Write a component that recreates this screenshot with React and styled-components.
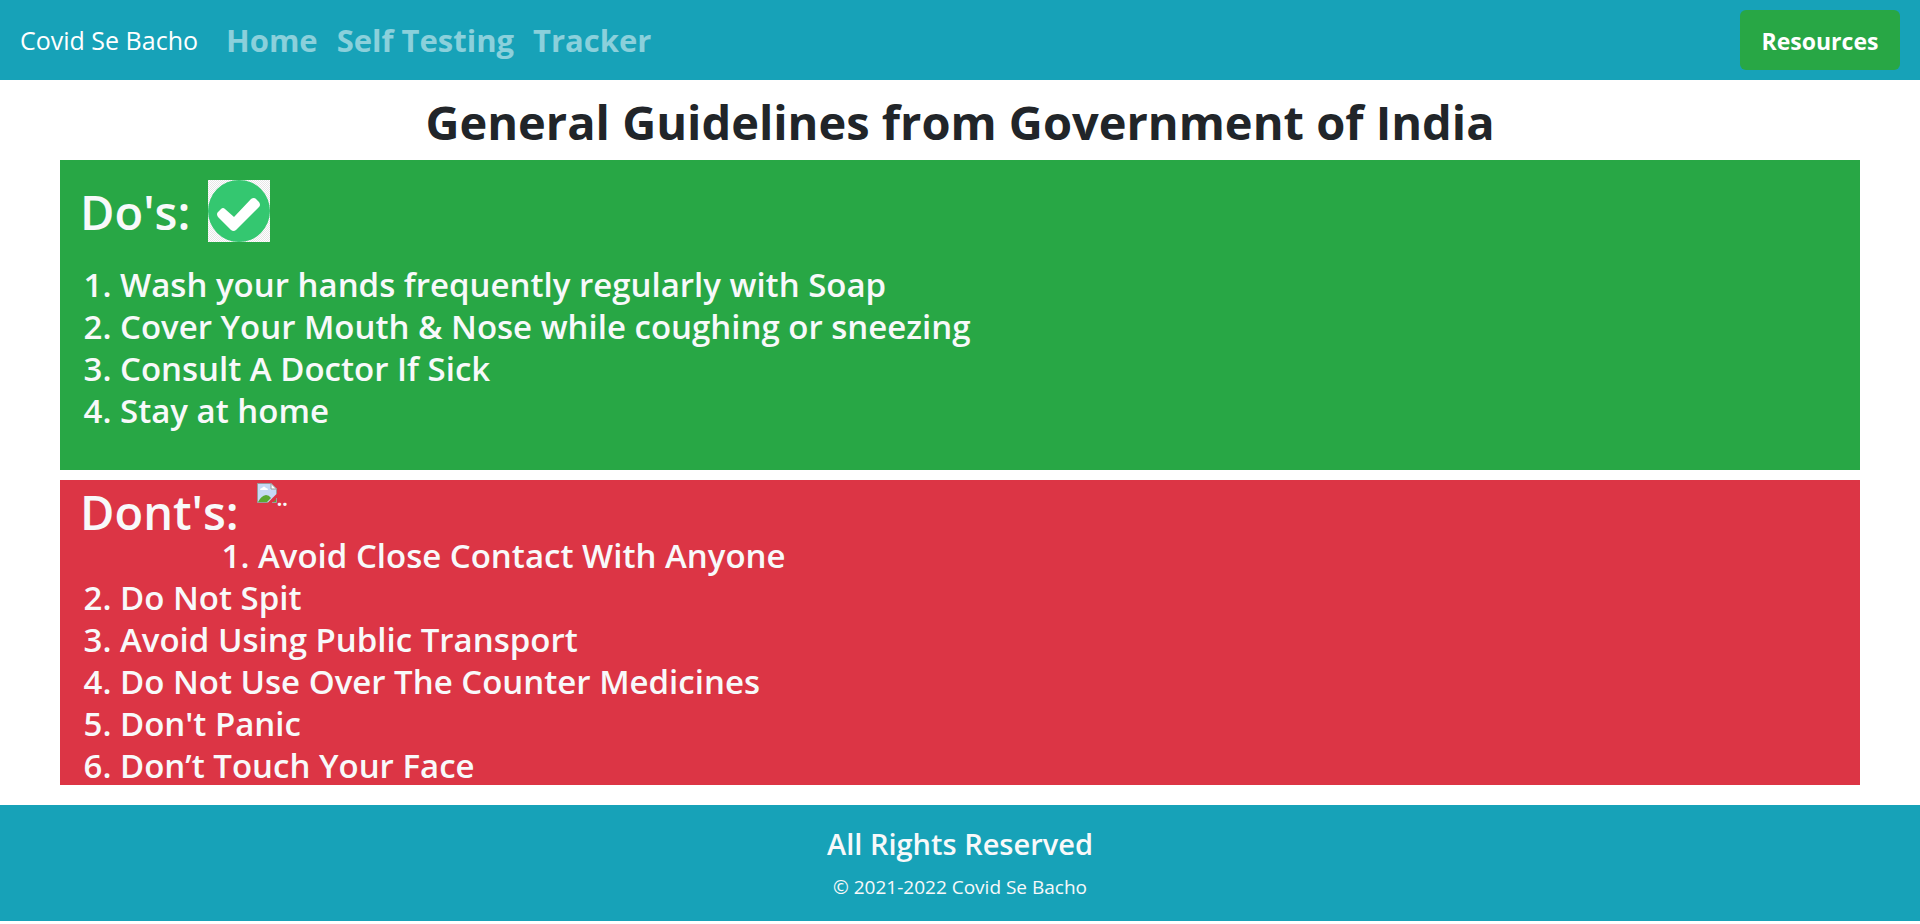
import React from "react";
import styled, { createGlobalStyle } from "styled-components";

const GlobalStyle = createGlobalStyle`
  *, *::before, *::after { box-sizing: border-box; }
  body {
    margin: 0;
    background: #fff;
    color: #212529;
    font-family: "Segoe UI", "Open Sans", "Noto Sans", sans-serif;
    font-size: 19px;
    line-height: 30px;
  }
`;

const Navbar = styled.nav`
  display: flex;
  align-items: center;
  padding: 10px 20px;
  background: #17a2b8;
`;

const Brand = styled.a`
  margin-right: 28px;
  color: #fff;
  font-size: 25px;
  font-weight: 500;
  text-decoration: none;
  white-space: nowrap;
`;

const NavLinks = styled.div`
  display: flex;
  flex: 1;
  gap: 19px;
`;

const NavLink = styled.a`
  color: rgba(255, 255, 255, 0.5);
  font-size: 31px;
  line-height: 52px;
  font-weight: 700;
  text-decoration: none;
  white-space: nowrap;
`;

const ResourcesButton = styled.button`
  min-width: 160px;
  height: 60px;
  padding: 2px 20px 0;
  border: 0;
  border-radius: 6px;
  background: #28a745;
  color: #fff;
  font: inherit;
  font-size: 23px;
  font-weight: 700;
`;

const Title = styled.h1`
  margin: 12px 20px 8px;
  font-size: 47px;
  line-height: 60px;
  font-weight: 700;
  text-align: center;
`;

const Panel = styled.section`
  display: flow-root;
  margin: 0 60px ${(p) => (p.$danger ? 20 : 10)}px;
  padding: ${(p) => (p.$danger ? "0 20px" : "20px 20px 40px")};
  background: ${(p) => (p.$danger ? "#dc3545" : "#28a745")};
  color: #f8f9fa;
`;

const PanelHeader = styled.div`
  display: flex;
  align-items: flex-start;
  gap: 18px;
  height: ${(p) => p.$height}px;
`;

const PanelTitle = styled.h2`
  margin: 0;
  padding-top: 2px;
  font-size: 47px;
  line-height: 60px;
  font-weight: 600;
`;

const CheckTile = styled.svg`
  width: 62px;
  height: 62px;
`;

const MissingImage = styled.span`
  display: flex;
  padding-top: 3px;
  line-height: 32px;
  font-weight: 700;

  svg { width: 20px; height: 20px; }
`;

const Rules = styled.ol`
  margin: 2px 0 -2px;
  padding-left: 40px;
  font-size: 33px;
  line-height: 42px;
  font-weight: 600;

  li:first-child { margin-left: ${(p) => p.$firstIndent || 0}px; }
`;

const Footer = styled.footer`
  padding: 21px 20px 19px;
  background: #17a2b8;
  color: #f8f9fa;
  text-align: center;
`;

const FooterTitle = styled.h3`
  margin: 0 0 10px;
  font-size: 29px;
  line-height: 36px;
  font-weight: 600;
`;

const Copyright = styled.p`
  margin: 0;
`;

const dos = [
  "Wash your hands frequently regularly with Soap",
  "Cover Your Mouth & Nose while coughing or sneezing",
  "Consult A Doctor If Sick",
  "Stay at home",
];

const donts = [
  "Avoid Close Contact With Anyone",
  "Do Not Spit",
  "Avoid Using Public Transport",
  "Do Not Use Over The Counter Medicines",
  "Don't Panic",
  "Don’t Touch Your Face",
];

function CheckIcon() {
  return (
    <CheckTile viewBox="0 0 62 62" aria-hidden="true">
      <defs>
        <pattern id="tile" width="2" height="2" patternUnits="userSpaceOnUse">
          <rect width="2" height="2" fill="#fff" />
          <rect width="1" height="1" fill="#e6e6e6" />
          <rect x="1" y="1" width="1" height="1" fill="#e6e6e6" />
        </pattern>
      </defs>
      <rect width="62" height="62" fill="url(#tile)" />
      <circle cx="31" cy="31" r="31" fill="#34c770" />
      <path
        d="M17 29 Q15 27 13 29 L10 32 Q8 34 10 37 L23 50 Q25.5 52 28 50 L51 27 Q53 25 51 22 L48 19 Q46 17 43 19 L26 37 Z"
        fill="#fff"
      />
    </CheckTile>
  );
}

function BrokenImageIcon() {
  return (
    <svg viewBox="0 0 20 20" aria-hidden="true">
      <path d="M0.5 0.5 H14 L19.5 6 V11 L11 19.5 H0.5 Z" fill="#c6d9f5" />
      <path d="M3 7 Q3 5 5 5 Q7 2 9 5 Q11 5 11 7 Z" fill="#fff" />
      <path d="M1 19 Q4 13 9 12 Q12 12 14 15 L10 19 Z" fill="#5aa832" />
      <path d="M16 19.5 L19.5 16 V19.5 Z" fill="#5aa832" />
      <path d="M11 19.5 H0.5 V0.5 H14 L19.5 6 V11" fill="none" stroke="#9a9a9a" />
      <path d="M14 0.5 V6 H19.5 Z" fill="#fff" stroke="#9a9a9a" />
      <path d="M15 19.5 H19.5 V15" fill="none" stroke="#9a9a9a" />
    </svg>
  );
}

export default function App() {
  return (
    <>
      <GlobalStyle />
      <Navbar>
        <Brand href="#">Covid Se Bacho</Brand>
        <NavLinks>
          <NavLink href="#home">Home</NavLink>
          <NavLink href="#testing">Self Testing</NavLink>
          <NavLink href="#tracker">Tracker</NavLink>
        </NavLinks>
        <ResourcesButton type="button">Resources</ResourcesButton>
      </Navbar>
      <main>
        <Title>General Guidelines from Government of India</Title>
        <Panel>
          <PanelHeader $height={82}>
            <PanelTitle>Do's:</PanelTitle>
            <CheckIcon />
          </PanelHeader>
          <Rules>
            {dos.map((rule) => <li key={rule}>{rule}</li>)}
          </Rules>
        </Panel>
        <Panel $danger>
          <PanelHeader $height={53}>
            <PanelTitle>Dont's:</PanelTitle>
            <MissingImage>
              <BrokenImageIcon />
              ..
            </MissingImage>
          </PanelHeader>
          <Rules $firstIndent={138}>
            {donts.map((rule) => <li key={rule}>{rule}</li>)}
          </Rules>
        </Panel>
      </main>
      <Footer>
        <FooterTitle>All Rights Reserved</FooterTitle>
        <Copyright>© 2021-2022 Covid Se Bacho</Copyright>
      </Footer>
    </>
  );
}
